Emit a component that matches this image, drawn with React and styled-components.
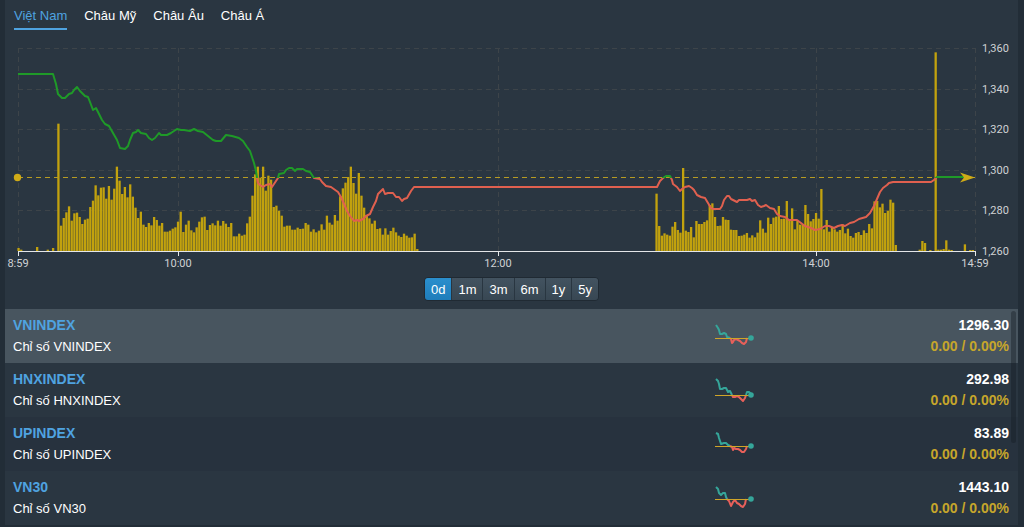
import React, { useState } from "react";
import styled, { createGlobalStyle } from "styled-components";

const GlobalStyle = createGlobalStyle`
  * {
    box-sizing: border-box;
  }
  body {
    margin: 0;
    background: #222d37;
    color: #fff;
    font-family: "Liberation Sans", Arial, sans-serif;
    font-size: 13px;
  }
`;

const regions = ["Việt Nam", "Châu Mỹ", "Châu Âu", "Châu Á"];
const ranges = ["0d", "1m", "3m", "6m", "1y", "5y"];

const indexes = [
  {
    code: "VNINDEX",
    name: "Chỉ số VNINDEX",
    value: "1296.30",
    base: 15,
    up: "0,2 2,5 3,7 4,11 6,11 8,10 10,11 11,14 14,15",
    down: "14,15 15,16 16,20 17,19 18,17 20,16 22,17 24,18 26,20 28,21 30,19 31,15",
    end: "32,15",
  },
  {
    code: "HNXINDEX",
    name: "Chỉ số HNXINDEX",
    value: "292.98",
    base: 18,
    up: "0,2 2,4 3,7 4,12 6,12 8,11 10,11 12,15 14,14 15,16 16,18",
    down: "16,18 17,20 19,20 21,19 23,20 25,22 27,24 29,21 30,18",
    end: "30,18 31,15 33,15 35,17",
  },
  {
    code: "UPINDEX",
    name: "Chỉ số UPINDEX",
    value: "83.89",
    base: 15,
    up: "0,2 2,3 3,7 5,13 8,12 10,12 12,14 14,15",
    down: "14,15 16,16 17,19 18,17 20,18 22,18 24,19 26,21 28,21 30,18 31,15",
    end: "32,15",
  },
  {
    code: "VN30",
    name: "Chỉ số VN30",
    value: "1443.10",
    base: 14,
    up: "0,2 2,4 3,8 5,10 7,8 9,8 10,12 11,14",
    down: "11,14 13,16 15,21 17,17 19,15 21,18 23,19 25,21 27,22 29,19 30,14",
    end: "32,14",
  },
];

// traded volume per minute, keyed by the minute each run starts at
const volumes = [
  { start: 0, data: [9, 4, 0, 0, 0, 0, 0, 12, 0, 0, 0, 4, 0, 9] },
  {
    start: 15,
    data: [
      382, 76, 99, 116, 134, 91, 113, 115, 102, 81, 94, 97, 132, 151, 197, 167,
      190, 191, 157, 195, 154, 187, 253, 211, 171, 192, 161, 200, 163, 130, 99,
      118, 79, 72, 84, 77, 102, 93, 76, 84, 58, 58, 61, 67, 71, 88, 118, 57, 79,
      91, 62, 56, 71, 88, 101, 103, 63, 78, 83, 77, 91, 76, 90, 82, 72, 84, 44,
      44, 52, 46, 49, 83, 103, 166, 230, 253, 220, 253, 181, 226, 214, 132, 136,
      121, 106, 73, 76, 76, 64, 64, 70, 66, 67, 84, 79, 58, 65, 56, 61, 80, 64,
      106, 85, 79, 108, 91, 164, 188, 205, 222, 253, 204, 172, 234, 166, 130,
      107, 98, 82, 91, 66, 68, 49, 68, 49, 60, 70, 56, 46, 42, 52, 46, 40, 41,
      52, 6,
    ],
  },
  {
    start: 240,
    data: [
      172, 75, 46, 53, 49, 46, 73, 87, 63, 55, 249, 61, 57, 72, 41, 90, 81, 81,
      87, 92, 138, 143, 102, 75, 76, 102, 94, 93, 64, 63, 63, 45, 46, 49, 54, 40,
      47, 41, 55, 92, 67, 55, 100, 81, 100, 103, 135, 96, 97, 150, 96, 128, 65,
      91, 79, 81, 138, 111, 89, 96, 114, 97, 186, 65, 93, 58, 71, 65, 58, 63, 80,
      53, 67, 45, 40, 54, 57, 48, 62, 54, 81, 68, 149, 150, 131, 142, 114, 121,
      154, 145, 18,
    ],
  },
  {
    start: 339,
    data: [
      4, 30, 24, 0, 3, 0, 596, 4, 4, 6, 32, 4, 3, 0, 0, 0, 0, 20, 0, 3, 3,
    ],
  },
];

const priceLine =
  "18,74 53,74 56,84 58,94 62,98 65,98 69,94 72,93 74,90 77,87 80,91 83,94 85,96 88,97 " +
  "90,102 93,110 96,108 99,114 102,120 105,124 109,126 113,133 117,140 120,148 125,149 128,146 " +
  "130,140 133,133 136,132 138,130 141,133 146,134 149,138 152,140 155,138 159,133 161,135 " +
  "167,135 171,133 174,131 177,129 181,130 184,130 190,131 194,129 198,131 203,132 208,136 " +
  "213,140 216,141 221,141 226,135 232,136 239,138 243,141 247,147 250,151 252,157 254,163 " +
  "256,171 257,178 258,183 260,185 263,187 266,185 270,184 272,187 274,184 278,178 279,174 " +
  "284,173 286,170 289,168 292,168 295,171 297,169 303,169 306,171 310,172 312,175 314,178 " +
  "320,179 322,182 326,186 331,187 338,192 341,197 344,204 347,211 350,216 354,221 357,220 " +
  "359,221 363,219 366,216 370,214 373,207 376,201 378,194 381,191 383,189 385,194 388,193 " +
  "393,193 396,197 399,197 402,201 404,199 407,198 411,191 414,187 657,187 660,181 663,178 " +
  "666,176 670,176 672,180 673,184 677,187 680,191 682,189 685,187 689,186 692,188 694,190 " +
  "697,195 701,197 705,198 708,203 711,208 713,209 720,209 722,206 724,200 727,196 729,196 " +
  "731,199 737,202 739,200 747,200 750,199 752,201 755,200 758,205 761,207 764,206 766,205 " +
  "770,208 774,209 777,214 780,216 785,217 789,220 797,220 801,223 805,226 811,228 815,230 " +
  "820,229 825,226 829,226 834,228 838,226 842,225 845,226 850,223 854,222 859,219 866,217 " +
  "870,213 874,206 877,199 880,192 883,188 887,185 889,183 893,182 931,182 934,180 937,177 970,177";

const prices = ["1,360", "1,340", "1,320", "1,300", "1,280", "1,260"];
const times = [
  { label: "8:59", x: 18 },
  { label: "10:00", x: 178 },
  { label: "12:00", x: 498 },
  { label: "14:00", x: 816 },
  { label: "14:59", x: 975 },
];

const PLOT = { left: 18, right: 975, top: 48, bottom: 251 };
const minuteX = (i) => PLOT.left + (i * (PLOT.right - PLOT.left)) / 360;
const priceY = (i) => PLOT.top + (i * (PLOT.bottom - PLOT.top)) / 5;

const IndexChart = () => (
  <Chart viewBox="5 32 1013 244" role="img" aria-label="VNINDEX">
    <defs>
      <clipPath id="above">
        <rect x="0" y="0" width="1024" height="178" />
      </clipPath>
      <clipPath id="below">
        <rect x="0" y="178" width="1024" height="100" />
      </clipPath>
    </defs>

    {prices.slice(0, 5).map((p, i) => (
      <GridLine
        key={p}
        x1={PLOT.left}
        x2={PLOT.right}
        y1={Math.round(priceY(i)) + 0.5}
        y2={Math.round(priceY(i)) + 0.5}
      />
    ))}
    {times.map((t) => (
      <GridLine
        key={t.label}
        x1={t.x + 0.5}
        x2={t.x + 0.5}
        y1={PLOT.top}
        y2={PLOT.bottom}
      />
    ))}

    {volumes.map(({ start, data }) =>
      data.map((v, i) => (
        <VolumeBar
          key={start + i}
          x={minuteX(start + i) - 0.6}
          y={PLOT.bottom - v / 3}
          width="2.3"
          height={v / 3}
        />
      ))
    )}

    <RefLine x1={PLOT.left} x2={PLOT.right} y1="177.5" y2="177.5" />
    <PriceLine points={priceLine} clipPath="url(#above)" $color="#1f9a28" />
    <PriceLine points={priceLine} clipPath="url(#below)" $color="#e0604f" />
    <circle cx="17.5" cy="177.5" r="3.7" fill="#d0ab17" />
    <path d="M960 172.5 L975 177.5 L960 182.5 L964 177.5 Z" fill="#d0ab17" />

    <Axis d={`M${PLOT.left} 251.5 H${PLOT.right + 1}`} />
    {times.map((t) => (
      <Axis key={t.label} d={`M${t.x + 0.5} 251 v5`} />
    ))}
    {times.map((t) => (
      <AxisLabel key={t.label} x={t.x} y="267" textAnchor="middle">
        {t.label}
      </AxisLabel>
    ))}
    {prices.map((p, i) => (
      <AxisLabel key={p} x="982" y={Math.round(priceY(i)) + 4}>
        {p}
      </AxisLabel>
    ))}
  </Chart>
);

const Sparkline = ({ item }) => (
  <Spark viewBox="-2 0 40 28">
    <SparkLine points={item.up} $color="#35a69a" />
    <SparkLine points={item.down} $color="#e8605a" />
    <path d={`M-1 ${item.base}.5 H33`} stroke="#d0a528" />
    <SparkLine points={item.end} $color="#35a69a" />
    <circle cx="35" cy={item.base} r="2.8" fill="#35a69a" />
  </Spark>
);

const App = () => {
  const [region, setRegion] = useState(regions[0]);
  const [range, setRange] = useState(ranges[0]);
  const [selected, setSelected] = useState("VNINDEX");

  return (
    <>
      <GlobalStyle />
      <Panel>
        <Tabs>
          {regions.map((r) => (
            <Tab key={r} $active={r === region} onClick={() => setRegion(r)}>
              {r}
            </Tab>
          ))}
        </Tabs>
        <IndexChart />
        <Ranges>
          {ranges.map((r) => (
            <RangeButton
              key={r}
              $active={r === range}
              onClick={() => setRange(r)}
            >
              {r}
            </RangeButton>
          ))}
        </Ranges>
        <ListWrap>
          <IndexTable>
            <tbody>
              {indexes.map((item) => (
                <Row
                  key={item.code}
                  $active={item.code === selected}
                  onClick={() => setSelected(item.code)}
                >
                  <NameCell>
                    <Code>{item.code}</Code>
                    <Name>{item.name}</Name>
                  </NameCell>
                  <SparkCell>
                    <Sparkline item={item} />
                  </SparkCell>
                  <ValueCell>
                    <Value>{item.value}</Value>
                    <Change>0.00 / 0.00%</Change>
                  </ValueCell>
                </Row>
              ))}
            </tbody>
          </IndexTable>
          <ScrollThumb />
        </ListWrap>
      </Panel>
    </>
  );
};

export default App;

const Panel = styled.main`
  margin: 0 6px 2px 5px;
  background: #2a3641;
`;

const Tabs = styled.nav`
  display: flex;
  gap: 17px;
  height: 32px;
  padding: 4px 9px 2px;
`;

const Tab = styled.button`
  height: 26px;
  padding: 0 0 2px;
  border: 0;
  border-bottom: 2px solid ${(p) => (p.$active ? "#4fa3e0" : "transparent")};
  background: none;
  color: ${(p) => (p.$active ? "#4fa3e0" : "#fff")};
  font: inherit;
  cursor: pointer;
`;

const Chart = styled.svg`
  display: block;
  width: 100%;
`;

const GridLine = styled.line`
  stroke: #3d4449;
  stroke-dasharray: 5 4;
`;

const VolumeBar = styled.rect`
  fill: #c2a20e;
`;

const RefLine = styled.line`
  stroke: #b89c22;
  stroke-dasharray: 5 4;
`;

const PriceLine = styled.polyline`
  fill: none;
  stroke: ${(p) => p.$color};
  stroke-width: 2;
  stroke-linejoin: round;
`;

const Axis = styled.path`
  fill: none;
  stroke: #e4e6e8;
`;

const AxisLabel = styled.text`
  fill: #cfd2d4;
  font-family: Roboto, sans-serif;
  font-size: 11px;
`;

const Ranges = styled.div`
  display: flex;
  width: fit-content;
  margin: 1px auto 8px;
  border: 1px solid #202a33;
  border-radius: 4px;
  overflow: hidden;
`;

const RangeButton = styled.button`
  height: 22px;
  padding: 0 6px;
  border: 0;
  background: ${(p) =>
    p.$active
      ? "linear-gradient(#2b8fcd, #1f7dba)"
      : "linear-gradient(#435360, #384753)"};
  color: #fff;
  font: inherit;
  cursor: pointer;

  & + & {
    border-left: 1px solid #293641;
  }
`;

const ListWrap = styled.div`
  position: relative;
`;

const IndexTable = styled.table`
  width: 100%;
  border-collapse: collapse;
  table-layout: fixed;
`;

const Row = styled.tr`
  height: 54px;
  cursor: pointer;
  background: ${(p) => (p.$active ? "#48555f" : "#2a3641")};

  &:nth-child(3) {
    background: ${(p) => (p.$active ? "#48555f" : "#27323e")};
  }
`;

const Cell = styled.td`
  padding: 6px 8px;
  line-height: 21px;
  vertical-align: top;
`;

const NameCell = styled(Cell)`
  width: 70%;
`;

const SparkCell = styled(Cell)`
  width: 10%;
  padding: 14px 0 12px;
`;

const ValueCell = styled(Cell)`
  padding-right: 9px;
  text-align: right;
  font-size: 14px;
  font-weight: bold;
`;

const Code = styled.div`
  color: #4fa3e0;
  font-size: 14px;
  font-weight: bold;
`;

const Name = styled.div``;

const Value = styled.div``;

const Change = styled.div`
  color: #c6a62b;
`;

const Spark = styled.svg`
  display: block;
  width: 40px;
  height: 28px;
`;

const SparkLine = styled.polyline`
  fill: none;
  stroke: ${(p) => p.$color};
  stroke-width: 2;
  stroke-linejoin: round;
`;

const ScrollThumb = styled.div`
  position: absolute;
  top: 2px;
  right: 2px;
  width: 5px;
  height: 132px;
  border-radius: 3px;
  background: rgba(20, 28, 36, 0.4);
`;
